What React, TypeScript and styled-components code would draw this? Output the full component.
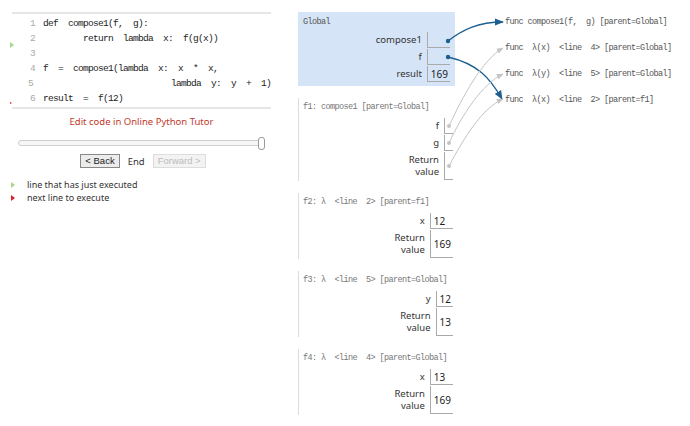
import React from 'react'
import styled, { createGlobalStyle } from 'styled-components'

const GlobalStyle = createGlobalStyle`
  body { margin: 0; background: #fff; }
  * { box-sizing: border-box; }
`

const mono = `"Liberation Mono", "DejaVu Sans Mono", monospace`
const sans = `"Noto Sans", "Liberation Sans", sans-serif`

const Page = styled.div`
  position: relative;
  display: flex;
  width: 690px;
  height: 426px;
  overflow: hidden;
  font-family: ${sans};
  color: #333;
`

const LeftPane = styled.div`
  width: 285px;
  padding: 12px 0 0 12px;
`

const CodeBox = styled.div`
  position: relative;
  width: 259px;
  border-top: 2px solid #e6e6e6;
  border-bottom: 2px solid #e6e6e6;
  padding: 2px 0 1px;
`

const LineRow = styled.div`
  display: flex;
  height: 15px;
  line-height: 15px;
  font-family: ${mono};
  font-size: 9.5px;
  letter-spacing: -0.7px;
  white-space: pre;
`

const LineNo = styled.span`
  width: 23px;
  text-align: right;
  color: #aaa;
`

const LineText = styled.span`
  margin-left: 8px;
  color: #222;
`

const Marker = styled.span<{ $color: string; $top: number; $size: number }>`
  position: absolute;
  left: -2px;
  top: ${p => p.$top}px;
  width: 0;
  height: 0;
  border-top: ${p => p.$size}px solid transparent;
  border-bottom: ${p => p.$size}px solid transparent;
  border-left: ${p => p.$size + 1}px solid ${p => p.$color};
`

const EditLink = styled.div`
  width: 259px;
  margin-top: 6px;
  text-align: center;
  font-size: 9.5px;
  line-height: 14px;
  color: #c0392b;
`

const Slider = styled.div`
  position: relative;
  width: 247px;
  height: 6px;
  margin: 11px 0 0 6px;
  border: 1px solid #cfcfcf;
  border-radius: 4px;
  background: #f6f6f6;
`

const Handle = styled.span`
  position: absolute;
  right: -1px;
  top: -4px;
  width: 7px;
  height: 13px;
  border: 1px solid #999;
  border-radius: 3px;
  background: #fff;
`

const Controls = styled.div`
  width: 259px;
  display: flex;
  justify-content: center;
  align-items: center;
  gap: 8px;
  margin-top: 8px;
  padding-left: 3px;
  font-size: 9.5px;
`

const Button = styled.span<{ $disabled?: boolean }>`
  display: inline-block;
  height: 14px;
  line-height: 12px;
  padding: 0 4px;
  border: 1px solid ${p => (p.$disabled ? '#ddd' : '#888')};
  background: ${p => (p.$disabled ? '#f3f3f3' : '#ececec')};
  color: ${p => (p.$disabled ? '#bbb' : '#222')};
  font-family: "Liberation Sans", sans-serif;
  font-size: 9.5px;
`

const Legend = styled.div`
  margin-top: 10px;
  font-size: 9px;
`

const LegendRow = styled.div`
  display: flex;
  align-items: center;
  height: 13px;
  margin-left: -1px;
`

const LegendArrow = styled.span<{ $color: string }>`
  width: 0;
  height: 0;
  border-top: 3.5px solid transparent;
  border-bottom: 3.5px solid transparent;
  border-left: 4px solid ${p => p.$color};
  margin-right: 12px;
`

const RightPane = styled.div`
  display: flex;
  margin-left: 13px;
`

const FramesCol = styled.div`
  width: 157px;
  padding-top: 12px;
`

const Frame = styled.div<{ $global?: boolean }>`
  margin-top: ${p => (p.$global ? 0 : 12)}px;
  padding: 4px ${p => (p.$global ? 5 : 2)}px ${p => (p.$global ? 4 : 1)}px ${p => (p.$global ? 5 : 4)}px;
  background: ${p => (p.$global ? '#d5e4f7' : 'transparent')};
  border-left: ${p => (p.$global ? 'none' : '1px solid #ddd')};
`

const FrameHeader = styled.div<{ $global?: boolean }>`
  font-family: ${mono};
  font-size: 8.5px;
  letter-spacing: -0.6px;
  line-height: ${p => (p.$global ? 12 : 10)}px;
  margin-bottom: ${p => (p.$global ? 4 : 6)}px;
  color: ${p => (p.$global ? '#555' : '#777')};
  white-space: pre;
`

const VarTable = styled.div`
  display: grid;
  grid-template-columns: auto auto;
  justify-content: end;
  row-gap: 1px;
`

const VarName = styled.div`
  display: flex;
  align-items: center;
  justify-content: flex-end;
  padding-right: 5px;
  text-align: right;
  font-size: 9.5px;
  line-height: 12.5px;
  color: #333;
`

const VarCell = styled.div<{ $tall?: boolean; $wide?: boolean }>`
  display: flex;
  align-items: center;
  height: ${p => (p.$tall ? 28 : 16)}px;
  min-width: ${p => (p.$wide ? 20 : 9)}px;
  padding: 0 2px 0 3px;
  border-left: 1px solid #aaa;
  border-bottom: 1px solid #aaa;
  font-size: 10px;
  color: #222;
`

const HeapCol = styled.div`
  margin-left: 50px;
  padding-top: 9px;
`

const HeapItem = styled.div`
  height: 26px;
  line-height: 26px;
  font-family: ${mono};
  font-size: 8.5px;
  letter-spacing: -0.6px;
  color: #555;
  white-space: pre;
`

const Overlay = styled.svg`
  position: absolute;
  left: 0;
  top: 0;
  pointer-events: none;
`

const code = [
  'def  compose1(f,  g):',
  '        return  lambda  x:  f(g(x))',
  '',
  'f  =  compose1(lambda  x:  x  *  x,',
  '                          lambda  y:  y  +  1)',
  'result  =  f(12)',
]

type Row = { name: React.ReactNode; value?: string; tall?: boolean }

const frames: { header: string; rows: Row[] }[] = [
  {
    header: 'f1: compose1 [parent=Global]',
    rows: [{ name: 'f' }, { name: 'g' }, { name: <>Return<br />value</>, tall: true }],
  },
  {
    header: 'f2: λ  <line  2> [parent=f1]',
    rows: [{ name: 'x', value: '12' }, { name: <>Return<br />value</>, value: '169', tall: true }],
  },
  {
    header: 'f3: λ  <line  5> [parent=Global]',
    rows: [{ name: 'y', value: '12' }, { name: <>Return<br />value</>, value: '13', tall: true }],
  },
  {
    header: 'f4: λ  <line  4> [parent=Global]',
    rows: [{ name: 'x', value: '13' }, { name: <>Return<br />value</>, value: '169', tall: true }],
  },
]

const heap = [
  'func compose1(f,  g) [parent=Global]',
  'func  λ(x)  <line  4> [parent=Global]',
  'func  λ(y)  <line  5> [parent=Global]',
  'func  λ(x)  <line  2> [parent=f1]',
]

const blue = '#1d5f91'
const gray = '#c4c4c4'

const Arrows = () => (
  <Overlay width="690" height="426" viewBox="0 0 690 426">
    <defs>
      <marker id="hb" viewBox="0 0 10 10" refX="9" refY="5" markerWidth="7" markerHeight="7" orient="auto">
        <path d="M0 1 L10 5 L0 9 z" fill={blue} />
      </marker>
      <marker id="hg" viewBox="0 0 10 10" refX="9" refY="5" markerWidth="7" markerHeight="7" orient="auto">
        <path d="M0 1 L10 5 L0 9 z" fill={gray} />
      </marker>
    </defs>
    <path d="M448 41 C 462 30, 478 22, 503 22" stroke={blue} strokeWidth="1.3" fill="none" markerEnd="url(#hb)" />
    <path d="M448 57 C 478 64, 490 78, 502 99" stroke={blue} strokeWidth="1.3" fill="none" markerEnd="url(#hb)" />
    <path d="M449 126 C 462 98, 482 60, 503 48" stroke={gray} strokeWidth="1" fill="none" markerEnd="url(#hg)" />
    <path d="M449 143 C 462 115, 482 84, 503 74" stroke={gray} strokeWidth="1" fill="none" markerEnd="url(#hg)" />
    <path d="M449 166 C 464 138, 482 108, 503 99" stroke={gray} strokeWidth="1" fill="none" markerEnd="url(#hg)" />
    <circle cx="448" cy="41" r="2.2" fill={blue} />
    <circle cx="448" cy="57" r="2.2" fill={blue} />
    <circle cx="449" cy="126" r="2" fill={gray} />
    <circle cx="449" cy="143" r="2" fill={gray} />
    <circle cx="449" cy="166" r="2" fill={gray} />
  </Overlay>
)

export default function App() {
  return (
    <Page>
      <GlobalStyle />
      <LeftPane>
        <CodeBox>
          <Marker $color="#a8d88a" $top={28} $size={3} />
          <Marker $color="#e02020" $top={88} $size={1.5} />
          {code.map((line, i) => (
            <LineRow key={i}>
              <LineNo>{i + 1}</LineNo>
              <LineText>{line}</LineText>
            </LineRow>
          ))}
        </CodeBox>
        <EditLink>Edit code in Online Python Tutor</EditLink>
        <Slider>
          <Handle />
        </Slider>
        <Controls>
          <Button>&lt; Back</Button>
          <span>End</span>
          <Button $disabled>Forward &gt;</Button>
        </Controls>
        <Legend>
          <LegendRow>
            <LegendArrow $color="#a8d88a" />
            line that has just executed
          </LegendRow>
          <LegendRow>
            <LegendArrow $color="#e02020" />
            next line to execute
          </LegendRow>
        </Legend>
      </LeftPane>
      <RightPane>
        <FramesCol>
          <Frame $global>
            <FrameHeader $global>Global</FrameHeader>
            <VarTable>
              <VarName>compose1</VarName>
              <VarCell $wide />
              <VarName>f</VarName>
              <VarCell $wide />
              <VarName>result</VarName>
              <VarCell $wide>169</VarCell>
            </VarTable>
          </Frame>
          {frames.map(f => (
            <Frame key={f.header}>
              <FrameHeader>{f.header}</FrameHeader>
              <VarTable>
                {f.rows.map((r, i) => (
                  <React.Fragment key={i}>
                    <VarName>{r.name}</VarName>
                    <VarCell $tall={r.tall}>{r.value}</VarCell>
                  </React.Fragment>
                ))}
              </VarTable>
            </Frame>
          ))}
        </FramesCol>
        <HeapCol>
          {heap.map(h => (
            <HeapItem key={h}>{h}</HeapItem>
          ))}
        </HeapCol>
      </RightPane>
      <Arrows />
    </Page>
  )
}
